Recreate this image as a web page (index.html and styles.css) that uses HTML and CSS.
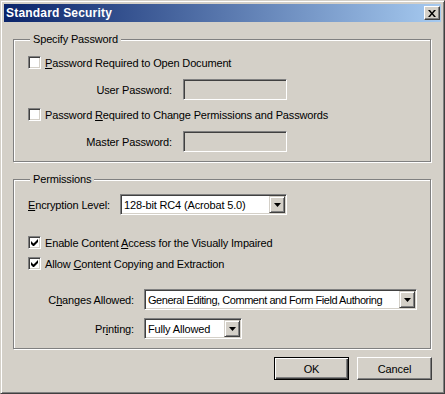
FILE: index.html
```html
<!DOCTYPE html>
<html lang="en">
<head>
  <meta charset="UTF-8" />
  <title>Standard Security</title>
  <link rel="stylesheet" href="styles.css">
</head>
<body>
  <div class="window">
    <div class="titlebar">
      <span class="title">Standard Security</span>
      <button class="close" type="button" aria-label="Close">
        <svg width="8" height="7" viewBox="0 0 8 7"><path d="M0 0h2l2 2.5L6 0h2L5 3.5 8 7H6L4 4.5 2 7H0l3-3.5z" fill="#000"/></svg>
      </button>
    </div>

    <div class="body">
      <fieldset class="group">
        <legend>Specify Password</legend>
        <div class="option">
          <label class="check"><span class="box"></span><span><u>P</u>assword Required to Open Document</span></label>
          <div class="field"><span class="field-label">User Password:</span><span class="textbox"></span></div>
        </div>
        <div class="option">
          <label class="check"><span class="box"></span><span>Password <u>R</u>equired to Change Permissions and Passwords</span></label>
          <div class="field"><span class="field-label">Master Password:</span><span class="textbox"></span></div>
        </div>
      </fieldset>

      <fieldset class="group perms">
        <legend>Permissions</legend>
        <div class="enc-row">
          <span class="enc-label"><u>E</u>ncryption Level:</span>
          <div class="combo enc-combo"><span class="combo-text">128-bit RC4 (Acrobat 5.0)</span><span class="combo-btn"><svg width="7" height="4" viewBox="0 0 7 4"><path d="M0 0h7L3.5 4z" fill="#000"/></svg></span></div>
        </div>

        <div class="checks">
          <label class="check"><span class="box checked"><svg width="7" height="7" viewBox="0 0 7 7"><path d="M0 2v3l2 2h1l4-4V0L2.5 4.5z" fill="#000"/></svg></span><span>Enable Content <u>A</u>ccess for the Visually Impaired</span></label>
          <label class="check"><span class="box checked"><svg width="7" height="7" viewBox="0 0 7 7"><path d="M0 2v3l2 2h1l4-4V0L2.5 4.5z" fill="#000"/></svg></span><span>Allow <u>C</u>ontent Copying and Extraction</span></label>
        </div>

        <div class="combos">
          <div class="field">
            <span class="perm-label">C<u>h</u>anges Allowed:</span>
            <div class="combo changes-combo"><span class="combo-text">General Editing, Comment and Form Field Authoring</span><span class="combo-btn"><svg width="7" height="4" viewBox="0 0 7 4"><path d="M0 0h7L3.5 4z" fill="#000"/></svg></span></div>
          </div>
          <div class="field">
            <span class="perm-label">Pr<u>i</u>nting:</span>
            <div class="combo print-combo"><span class="combo-text">Fully Allowed</span><span class="combo-btn"><svg width="7" height="4" viewBox="0 0 7 4"><path d="M0 0h7L3.5 4z" fill="#000"/></svg></span></div>
          </div>
        </div>
      </fieldset>

      <div class="buttons">
        <button class="btn default" type="button">OK</button>
        <button class="btn" type="button">Cancel</button>
      </div>
    </div>
  </div>
</body>
</html>
```

FILE: styles.css
```css
* {
  box-sizing: border-box;
}

body {
  margin: 0;
  background: #d4d0c8;
  font-family: "Liberation Sans", Arial, sans-serif;
  font-size: 11px;
  letter-spacing: -0.15px;
  color: #000;
}

u {
  text-decoration: underline;
  text-underline-offset: 1px;
}

.window {
  width: 445px;
  height: 394px;
  padding: 3px;
  border: 1px solid;
  border-color: #d4d0c8 #404040 #404040 #d4d0c8;
  box-shadow: inset 1px 1px 0 #fff, inset -1px -1px 0 #808080;
  display: flex;
  flex-direction: column;
}

.titlebar {
  height: 18px;
  padding: 0 1px 0 2px;
  background: linear-gradient(to right, #0a246a, #a6caf0);
  display: flex;
  align-items: center;
  justify-content: space-between;
}

.title {
  color: #fff;
  font-family: "Liberation Sans Narrow", "Liberation Sans", sans-serif;
  font-weight: bold;
  font-size: 12px;
  letter-spacing: 0.2px;
}

.close {
  width: 16px;
  height: 14px;
  padding: 0;
  background: #d4d0c8;
  border: 1px solid;
  border-color: #fff #404040 #404040 #fff;
  box-shadow: inset -1px -1px 0 #808080;
  display: flex;
  align-items: center;
  justify-content: center;
}

.body {
  padding: 11px 10px 0 9px;
  display: flex;
  flex-direction: column;
}

.group {
  margin: 0;
  padding: 10px 10px 9px 14px;
  min-width: 0;
  border: 1px solid #808080;
  box-shadow: inset 1px 1px 0 #fff, 1px 1px 0 #fff;
  display: flex;
  flex-direction: column;
  gap: 8px;
}

.group legend {
  margin-left: 2px;
  padding: 0 3px;
  line-height: 13px;
  background: #d4d0c8;
}

.perms {
  margin-top: 11px;
  padding-top: 8px;
  gap: 0;
}

.option {
  display: flex;
  flex-direction: column;
  gap: 10px;
}

.check {
  height: 13px;
  display: flex;
  align-items: center;
  gap: 4px;
}

.box {
  width: 13px;
  height: 13px;
  background: #fff;
  border: 1px solid;
  border-color: #808080 #fff #fff #808080;
  box-shadow: inset 1px 1px 0 #404040, inset -1px -1px 0 #d4d0c8;
  display: flex;
  align-items: center;
  justify-content: center;
}

.field {
  display: flex;
  align-items: center;
}

.field-label {
  width: 155px;
  padding-right: 11px;
  text-align: right;
}

.textbox {
  width: 104px;
  height: 21px;
  background: #d4d0c8;
  border: 1px solid;
  border-color: #808080 #fff #fff #808080;
  box-shadow: inset 1px 1px 0 #404040, inset -1px -1px 0 #d4d0c8;
}

.enc-row {
  display: flex;
  align-items: center;
}

.enc-label {
  width: 92px;
}

.combo {
  height: 21px;
  padding: 1px;
  background: #fff;
  border: 1px solid;
  border-color: #808080 #fff #fff #808080;
  box-shadow: inset 1px 1px 0 #404040, inset -1px -1px 0 #d4d0c8;
  display: flex;
  align-items: center;
}

.combo-text {
  flex: 1;
  padding-left: 2px;
  white-space: nowrap;
  overflow: hidden;
}

.combo-btn {
  width: 16px;
  height: 17px;
  background: #d4d0c8;
  border: 1px solid;
  border-color: #d4d0c8 #404040 #404040 #d4d0c8;
  box-shadow: inset 1px 1px 0 #fff, inset -1px -1px 0 #808080;
  display: flex;
  align-items: center;
  justify-content: center;
}

.enc-combo {
  width: 167px;
}

.checks {
  margin-top: 21px;
  display: flex;
  flex-direction: column;
  gap: 8px;
}

.combos {
  margin-top: 19px;
  display: flex;
  flex-direction: column;
  gap: 8px;
}

.perm-label {
  width: 116px;
  padding-right: 10px;
  text-align: right;
}

.changes-combo {
  width: 273px;
}

.changes-combo .combo-text {
  letter-spacing: -0.45px;
}

.print-combo {
  width: 98px;
}

.buttons {
  margin-top: 8px;
  margin-right: -1px;
  display: flex;
  justify-content: flex-end;
  gap: 8px;
}

.btn {
  width: 75px;
  height: 23px;
  padding: 0;
  font-family: inherit;
  font-size: 11px;
  letter-spacing: inherit;
  color: #000;
  background: #d4d0c8;
  border: 1px solid;
  border-color: #fff #404040 #404040 #fff;
  box-shadow: inset -1px -1px 0 #808080;
}

.btn.default {
  border-color: #000;
  box-shadow: inset 1px 1px 0 #fff, inset -1px -1px 0 #404040, inset -2px -2px 0 #808080;
}
```
